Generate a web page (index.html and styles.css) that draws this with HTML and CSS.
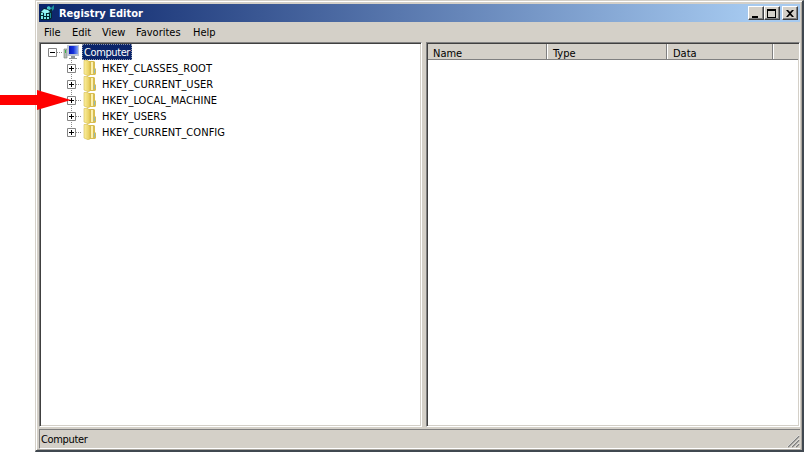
FILE: index.html
```
<!DOCTYPE html>
<html lang="en">
<head>
<meta charset="utf-8">
<title>Registry Editor</title>
<link rel="stylesheet" href="styles.css">
</head>
<body>
<svg class="defs" width="0" height="0" aria-hidden="true">
  <defs>
    <linearGradient id="gold" x1="0" x2="1"><stop stop-color="#fbf0a0"/><stop offset="1" stop-color="#e6ca55"/></linearGradient>
    <linearGradient id="screen" x1="0" x2="1"><stop stop-color="#0717ba"/><stop offset=".5" stop-color="#1835dc"/><stop offset="1" stop-color="#86a6f4"/></linearGradient>
    <symbol id="folder" viewBox="0 0 14 16">
      <path d="M5 1h6l1 1v6l1 1v5l-1 1H5z" fill="#d8bd50"/>
      <path d="M8 2h2v12H8z" fill="#fbf0b0"/>
      <path d="M1 .5h4l2 2V15l-2 .7L1 14z" fill="url(#gold)" stroke="#d4ba4e" stroke-width=".6"/>
      <path d="M11 9h1v4h-1z" fill="#8eb9bd"/>
    </symbol>
    <symbol id="plus" viewBox="0 0 9 9"><path d="M.5.5h8v8h-8z" fill="#fff" stroke="#848484"/><path d="M2 4.5h5M4.5 2v5" stroke="#000"/></symbol>
    <symbol id="minus" viewBox="0 0 9 9"><path d="M.5.5h8v8h-8z" fill="#fff" stroke="#848484"/><path d="M2 4.5h5" stroke="#000"/></symbol>
  </defs>
</svg>
<main class="window">
  <header class="titlebar">
    <svg class="app-icon" width="16" height="16" viewBox="0 0 16 16">
      <path d="M0 7l4-4 4 1 4 3v6l-2 2H1l-1-2z" fill="#06282e"/>
      <path d="M1 7l3-3 4 1 2 2-2 1H4z" fill="#9af4f4"/>
      <path d="M1 8h2v2H1zM1 11h2v3H1zM4 8h2v3H4zM4 12h2v2H4zM7 9h2v2H7zM7 12h2v2H7z" fill="#7ee9e9"/>
      <path d="M10 8h1v5h-1z" fill="#1b8d94"/>
      <path d="M7 2l2-1 2 2-1 2-3-1z" fill="#43c9cc"/><path d="M11 3l3-3v4l-2 2z" fill="#1b9299"/><path d="M10 5l2-1v2l-2 1z" fill="#062b31"/>
    </svg>
    <h1>Registry Editor</h1>
    <div class="controls">
      <button aria-label="Minimize"><svg width="12" height="11"><path d="M2 8h6v2H2z"/></svg></button>
      <button aria-label="Maximize"><svg width="12" height="11"><path d="M1 1h9v9H1zM2 3v6h7V3z" fill-rule="evenodd"/></svg></button>
      <button class="close" aria-label="Close"><svg width="12" height="11"><path d="M2 2h2l2 2 2-2h2L7 5.5 10 9H8L6 7 4 9H2l3-3.5z"/></svg></button>
    </div>
  </header>
  <nav class="menu"><span class="file">File</span><span class="edit">Edit</span><span class="view">View</span><span class="favorites">Favorites</span><span class="help">Help</span></nav>
  <section class="panes">
    <div class="pane tree">
      <div class="row root"><svg class="toggle" width="9" height="9"><use href="#minus"/></svg><i class="dots"></i>
        <svg class="computer" width="17" height="16" viewBox="0 0 17 16"><path d="M1 5h3v9H1z" fill="#b4bcb5" stroke="#818981" stroke-width=".7"/><path d="M2 6h1v3H2z" fill="#39b548"/><path d="M4 1h12v11H4z" fill="#bcc5d4"/><path d="M6 2h9v8H6z" fill="url(#screen)"/><path d="M8 12h4v2h2v1H6v-1h2z" fill="#8e9496"/></svg>
        <span class="selected">Computer</span></div>
      <div class="children">
        <div class="row"><svg class="toggle" width="9" height="9"><use href="#plus"/></svg><i class="dots"></i><svg class="folder" width="14" height="16"><use href="#folder"/></svg><span>HKEY_CLASSES_ROOT</span></div>
        <div class="row"><svg class="toggle" width="9" height="9"><use href="#plus"/></svg><i class="dots"></i><svg class="folder" width="14" height="16"><use href="#folder"/></svg><span>HKEY_CURRENT_USER</span></div>
        <div class="row"><svg class="toggle" width="9" height="9"><use href="#plus"/></svg><i class="dots"></i><svg class="folder" width="14" height="16"><use href="#folder"/></svg><span>HKEY_LOCAL_MACHINE</span></div>
        <div class="row"><svg class="toggle" width="9" height="9"><use href="#plus"/></svg><i class="dots"></i><svg class="folder" width="14" height="16"><use href="#folder"/></svg><span>HKEY_USERS</span></div>
        <div class="row"><svg class="toggle" width="9" height="9"><use href="#plus"/></svg><i class="dots"></i><svg class="folder" width="14" height="16"><use href="#folder"/></svg><span>HKEY_CURRENT_CONFIG</span></div>
      </div>
    </div>
    <div class="pane values"><div class="columns"><span>Name</span><span>Type</span><span>Data</span><span></span></div></div>
  </section>
  <footer class="status"><span>Computer</span><svg width="13" height="13"><path d="M1 12L12 1M5 12l7-7M9 12l3-3" stroke="#808080" stroke-width="1.7"/><path d="M0 12L12 0M4 12l8-8M8 12l4-4" stroke="#fff" stroke-width=".6"/></svg></footer>
</main>
<svg class="pointer" width="71" height="20" viewBox="0 0 71 20" aria-hidden="true"><path d="M0 5h37V0l34 10-34 10v-5H0z" fill="#f00"/></svg>
</body>
</html>
```
FILE: styles.css
```
* { box-sizing: border-box; }
body { margin: 0; width: 804px; height: 452px; overflow: hidden; background: #fff; color: #000; font: 11px/16px "DejaVu Sans Condensed", "DejaVu Sans", sans-serif; font-stretch: condensed; }
.defs { position: absolute; }
svg { display: block; flex: none; }
span { white-space: nowrap; }
.window { margin-left: 35px; width: 769px; height: 452px; background: #d4d0c8; border: solid; border-width: 1px 2px 2px 1px; border-color: #d4d0c8 #404850 #404850 #d4d0c8; box-shadow: inset 1px 1px #fff, inset -1px -1px #aaa69f; padding: 3px 2px 0 3px; display: flex; flex-direction: column; }
.titlebar { height: 18px; flex: none; display: flex; align-items: center; background: linear-gradient(90deg, #0a246a, #a6caf0 94%); padding: 0 2px 0 1px; }
.titlebar h1 { margin: 0 auto 0 3px; padding-top: 2px; color: #fff; font: bold 11px/16px "DejaVu Sans Condensed", "DejaVu Sans", sans-serif; font-stretch: condensed; }
.controls { display: flex; }
button { width: 16px; height: 14px; padding: 0 0 0 1px; border: solid 1px; border-color: #fff #404040 #404040 #fff; background: #d4d0c8; box-shadow: inset -1px -1px #808080; }
.close { margin-left: 2px; }
.menu { height: 20px; flex: none; display: flex; align-items: center; padding: 2px 0 0 5px; }
.menu .file { width: 28px; } .menu .edit { width: 30px; } .menu .view { width: 34px; } .menu .favorites { width: 57px; }
.panes { height: 385px; flex: none; display: grid; grid-template-columns: 383px 1fr; gap: 4px; }
.pane { background: #fff; border: 1px solid; border-color: #808080 #fff #fff #808080; box-shadow: inset 1px 1px #404040, inset -1px -1px #d4d0c8; min-width: 0; }
.tree { padding: 1px 0 0 8px; }
.row { height: 16px; display: flex; align-items: center; }
.dots { width: 6px; height: 1px; background: repeating-linear-gradient(90deg, #8a8a8a 0 1px, transparent 1px 2px); }
.selected { margin-left: 2px; width: 50px; height: 16px; padding-left: 2px; line-height: 17px; color: #fff; background: #0a246a; outline: 1px dotted #8c95ac; outline-offset: -1px; letter-spacing: -.4px; }
.children { padding-left: 19px; background: repeating-linear-gradient(#8a8a8a 0 1px, transparent 1px 2px) 23px 0 / 1px 72px no-repeat; }
.children .row span { margin-left: 5px; padding-top: 2px; letter-spacing: .05px; }
.folder { margin-left: 1px; }
.values { padding: 1px; }
.columns { height: 16px; display: grid; grid-template-columns: 119px 120px 106px 1fr; background: #d4d0c8; }
.columns span { height: 16px; padding: 2px 0 0 5px; line-height: 16px; border-bottom: 1px solid #808080; border-right: 1px solid #808080; }
.columns span + span { box-shadow: inset 1px 0 #fff; padding-left: 6px; }
.columns span:last-child { border-right: 0; }
.status { height: 20px; margin-top: 2px; flex: none; display: flex; justify-content: space-between; align-items: flex-end; border-top: 1px solid #808080; border-left: 1px solid #808080; border-bottom: 1px solid #fff; }
.status span { align-self: center; padding: 1px 0 0 1px; letter-spacing: -.35px; }
.pointer { position: absolute; left: 0; top: 90px; }
```
